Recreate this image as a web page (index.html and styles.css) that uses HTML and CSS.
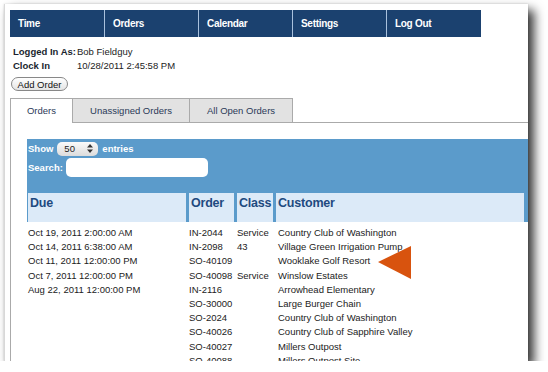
FILE: index.html
```html
<!DOCTYPE html>
<html lang="en">
<head>
  <meta charset="UTF-8">
  <title>Orders</title>
  <link rel="stylesheet" href="styles.css">
</head>
<body>
<div class="window">
  <nav class="topnav">
    <a href="#">Time</a>
    <a href="#">Orders</a>
    <a href="#">Calendar</a>
    <a href="#">Settings</a>
    <a href="#">Log Out</a>
  </nav>

  <div class="session">
    <div class="session-row"><b>Logged In As:</b><span>Bob Fieldguy</span></div>
    <div class="session-row"><b>Clock In</b><span>10/28/2011 2:45:58 PM</span></div>
  </div>
  <button class="add-order">Add Order</button>

  <div class="tabs">
    <div class="tab active">Orders</div>
    <div class="tab">Unassigned Orders</div>
    <div class="tab">All Open Orders</div>
    <div class="tab-rest"></div>
  </div>

  <div class="panel">
    <div class="dt-box">
      <div class="dt-len">Show <span class="dt-select">50 <svg width="6" height="9" viewBox="0 0 6 9"><path d="M3 0 L6 3.5 H0 Z M3 9 L0 5.5 H6 Z" fill="#333"/></svg></span> entries</div>
      <div class="dt-search">Search: <span class="dt-input"></span></div>
      <div class="grid dt-head">
        <div>Due</div>
        <div>Order</div>
        <div>Class</div>
        <div>Customer</div>
      </div>
    </div>
    <div class="rows">
      <div class="grid"><div>Oct 19, 2011 2:00:00 AM</div><div>IN-2044</div><div>Service</div><div>Country Club of Washington</div></div>
      <div class="grid"><div>Oct 14, 2011 6:38:00 AM</div><div>IN-2098</div><div>43</div><div>Village Green Irrigation Pump</div></div>
      <div class="grid"><div>Oct 11, 2011 12:00:00 PM</div><div>SO-40109</div><div></div><div>Wooklake Golf Resort</div></div>
      <div class="grid"><div>Oct 7, 2011 12:00:00 PM</div><div>SO-40098</div><div>Service</div><div>Winslow Estates</div></div>
      <div class="grid"><div>Aug 22, 2011 12:00:00 PM</div><div>IN-2116</div><div></div><div>Arrowhead Elementary</div></div>
      <div class="grid"><div></div><div>SO-30000</div><div></div><div>Large Burger Chain</div></div>
      <div class="grid"><div></div><div>SO-2024</div><div></div><div>Country Club of Washington</div></div>
      <div class="grid"><div></div><div>SO-40026</div><div></div><div>Country Club of Sapphire Valley</div></div>
      <div class="grid"><div></div><div>SO-40027</div><div></div><div>Millers Outpost</div></div>
      <div class="grid"><div></div><div>SO-40088</div><div></div><div>Millers Outpost Site</div></div>
    </div>
  </div>

  <svg class="pointer" width="34" height="34" viewBox="0 0 34 34"><polygon points="0,16 33,0 33,33" fill="#d8530e"/></svg>
</div>
</body>
</html>
```

FILE: styles.css
```css
body {
  margin: 0;
  background: #fff;
  font-family: "Liberation Sans", Arial, sans-serif;
  font-size: 9.5px;
  color: #222;
}

.window {
  position: relative;
  margin: 4px 0 0 4px;
  width: 524px;
  height: 357px;
  padding: 6px 0 0 5px;
  box-sizing: border-box;
  background: #fff;
  border-left: 1px solid #d8d8d8;
  box-shadow: 6px 6px 10px rgba(0, 0, 0, 0.8), 0 0 2px rgba(0, 0, 0, 0.15);
  overflow: hidden;
}

.topnav {
  display: flex;
  width: 471px;
  height: 27px;
  background: #1b416f;
}
.topnav a {
  width: 94px;
  padding-left: 8px;
  box-sizing: border-box;
  border-left: 1px solid #a9c1dd;
  color: #fff;
  font-weight: bold;
  font-size: 10px;
  letter-spacing: -0.3px;
  line-height: 27px;
  text-decoration: none;
}
.topnav a:first-child {
  border-left: none;
}

.session {
  margin: 8px 0 0 3px;
}
.session-row {
  display: flex;
  line-height: 14px;
}
.session-row b {
  width: 64px;
  color: #1a1f2e;
}

.add-order {
  display: block;
  margin: 4px 0 0 1px;
  width: 57px;
  height: 14px;
  padding: 0;
  border: 1px solid #888;
  border-radius: 7px;
  background: linear-gradient(#fff, #e4e4e4);
  font-family: "Liberation Sans", Arial, sans-serif;
  font-size: 9.5px;
  color: #111;
}

.tabs {
  display: flex;
  margin-top: 7px;
  height: 25px;
}
.tab {
  box-sizing: border-box;
  height: 25px;
  line-height: 24px;
  text-align: center;
  color: #2b3a58;
  background: #e2e2e2;
  border: 1px solid #aaa;
  border-left: none;
}
.tab:nth-child(1) { width: 63px; }
.tab:nth-child(2) { width: 117px; }
.tab:nth-child(3) { width: 103px; }
.tab.active {
  background: #fff;
  border-left: 1px solid #aaa;
  border-bottom: none;
}
.tab-rest {
  flex: 1;
  border-bottom: 1px solid #aaa;
}

.panel {
  border-left: 1px solid #aaa;
  padding: 16px 0 0 16px;
  height: 260px;
}

.dt-box {
  background: #5b9bcb;
  padding: 2px 0 0 1px;
  color: #fff;
  font-weight: bold;
}
.dt-len {
  display: flex;
  align-items: center;
  gap: 4px;
  height: 15px;
}
.dt-select {
  display: inline-flex;
  align-items: center;
  justify-content: space-between;
  box-sizing: border-box;
  width: 41px;
  height: 14px;
  padding: 0 5px 0 7px;
  border-radius: 5px;
  background: linear-gradient(#fafafa, #dcdcdc);
  color: #222;
  font-weight: normal;
}
.dt-search {
  display: flex;
  align-items: center;
  gap: 3px;
  margin-top: 2px;
  height: 19px;
}
.dt-input {
  width: 142px;
  height: 19px;
  border-radius: 5px;
  background: #fff;
}

.grid {
  display: grid;
  grid-template-columns: 158px 45px 36px 248px;
  column-gap: 3px;
}
.dt-head {
  margin-top: 16px;
}
.dt-head div {
  height: 29px;
  padding: 3px 0 0 2px;
  box-sizing: border-box;
  background: #dceaf8;
  color: #1f4a80;
  font-size: 12.5px;
  letter-spacing: -0.2px;
}

.rows {
  padding: 4px 0 0 1px;
}
.rows .grid div {
  line-height: 14.2px;
  white-space: nowrap;
}
.rows .grid div:nth-child(4) {
  padding-left: 2px;
}

.pointer {
  position: absolute;
  left: 373px;
  top: 242px;
}
```
